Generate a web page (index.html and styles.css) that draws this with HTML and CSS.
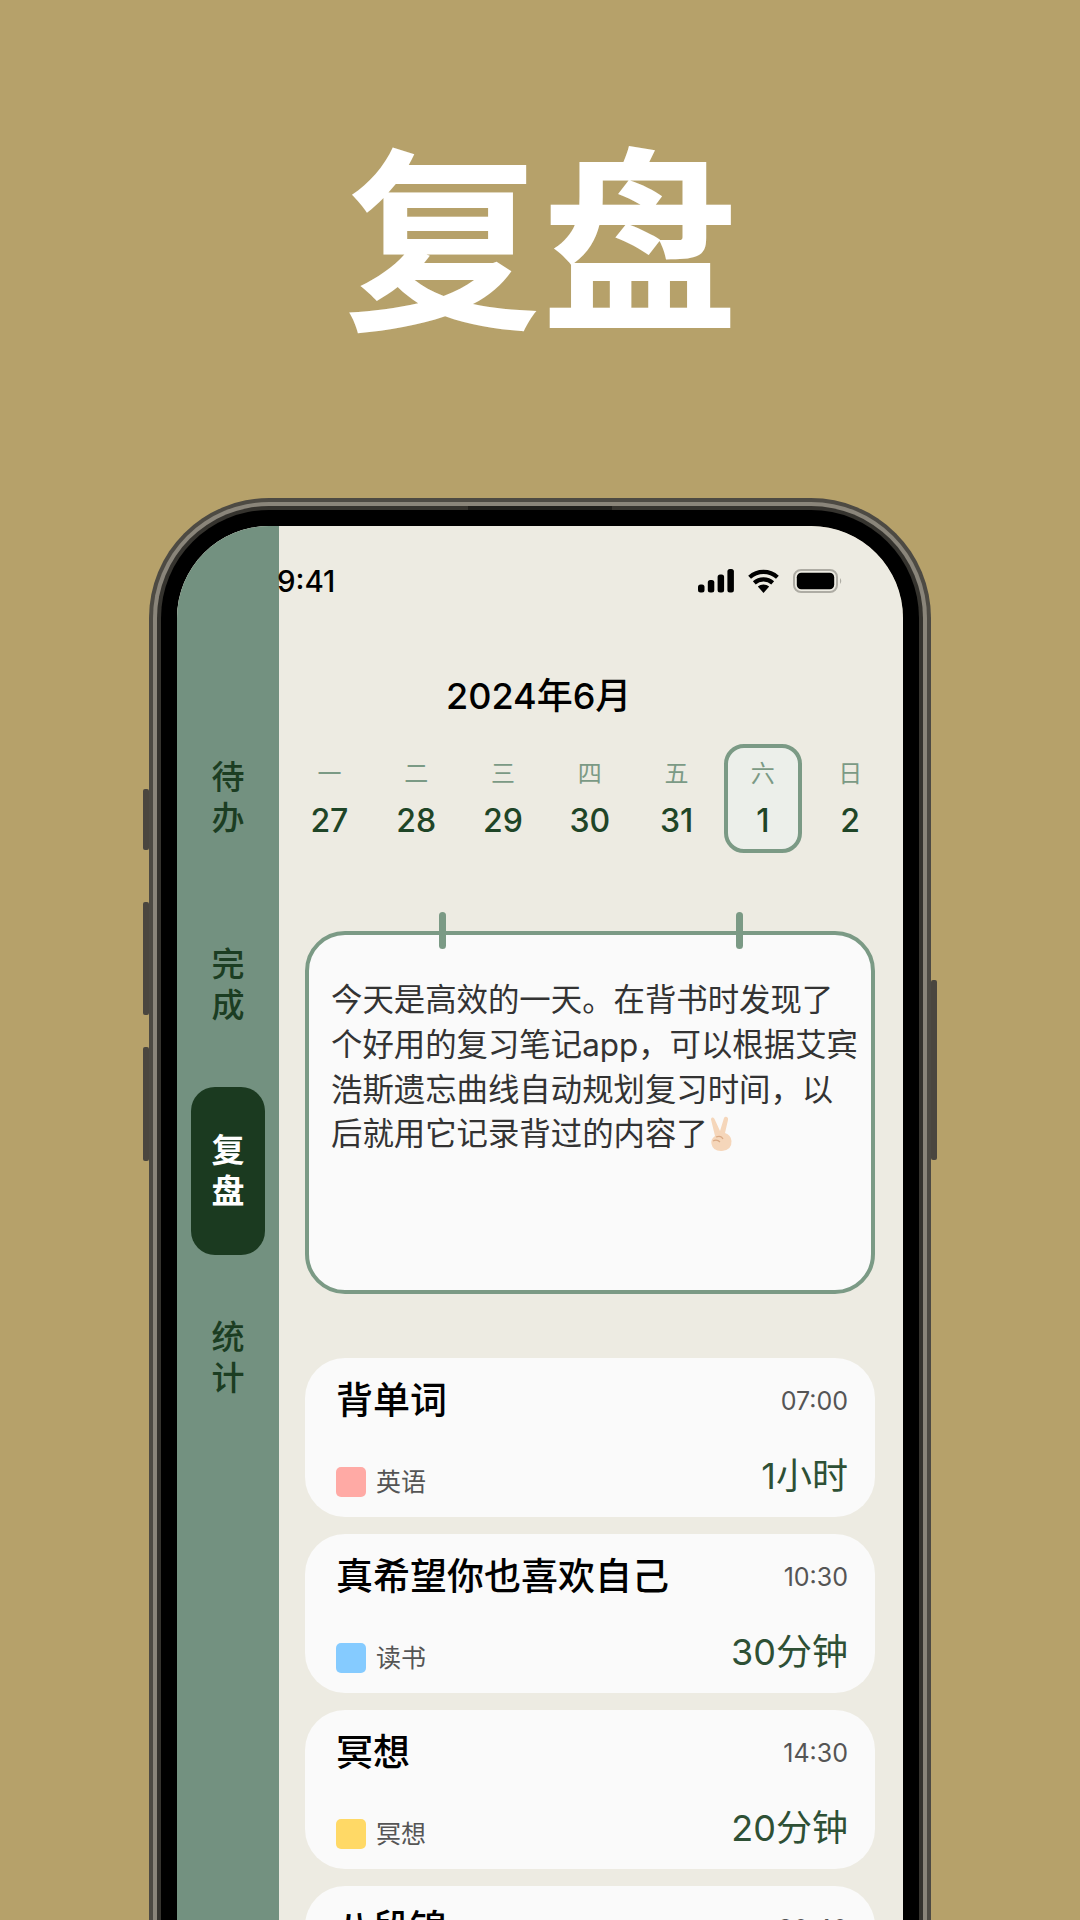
FILE: index.html
```html
<!DOCTYPE html>
<html lang="zh-CN">

<head>
    <meta charset="UTF-8">
    <meta name="viewport" content="width=device-width, initial-scale=1.0">
    <title>复盘</title>
    <link rel="stylesheet" href="styles.css">
</head>

<body>
    <h1 class="headline">复盘</h1>

    <div class="phone">
        <span class="side-btn mute"></span>
        <span class="side-btn vol-up"></span>
        <span class="side-btn vol-down"></span>
        <span class="side-btn power"></span>
        <span class="speaker"></span>

        <div class="screen">
            <nav class="rail">
                <div class="rail-item">待<br>办</div>
                <div class="rail-item">完<br>成</div>
                <div class="rail-item active">复<br>盘</div>
                <div class="rail-item">统<br>计</div>
            </nav>

            <main class="content">
                <div class="status-bar">
                    <span class="clock">9:41</span>
                    <div class="status-icons">
                        <!-- signal -->
                        <svg width="36" height="24" viewBox="0 0 36 24">
                            <rect x="0" y="15.5" width="6.5" height="8" rx="2.5" />
                            <rect x="9.8" y="11" width="6.5" height="12.5" rx="2.5" />
                            <rect x="19.6" y="5.5" width="6.5" height="18" rx="2.5" />
                            <rect x="29.4" y="0" width="6.5" height="23.5" rx="2.5" />
                        </svg>
                        <!-- wifi -->
                        <svg width="31" height="24" viewBox="0 0 31 24">
                            <path d="M15.5 24 L9.8 17.6 A8.6 8.6 0 0 1 21.2 17.6 Z" />
                            <path d="M6.3 13.9 A13.6 13.6 0 0 1 24.7 13.9" fill="none" stroke="#000" stroke-width="4.2" />
                            <path d="M1.6 8.2 A20.8 20.8 0 0 1 29.4 8.2" fill="none" stroke="#000" stroke-width="4.2" />
                        </svg>
                        <!-- battery -->
                        <svg width="50" height="24" viewBox="0 0 50 24">
                            <rect x="1" y="1" width="43" height="22" rx="7" fill="none" stroke="#aeaca4" stroke-width="2" />
                            <rect x="3.8" y="3.8" width="37.4" height="16.4" rx="4.5" />
                            <path d="M47 9 Q49.5 12 47 15 Z" fill="#aeaca4" />
                        </svg>
                    </div>
                </div>

                <div class="month">2024年6月</div>

                <div class="week">
                    <div class="day"><span class="dow">一</span><span class="num">27</span></div>
                    <div class="day"><span class="dow">二</span><span class="num">28</span></div>
                    <div class="day"><span class="dow">三</span><span class="num">29</span></div>
                    <div class="day"><span class="dow">四</span><span class="num">30</span></div>
                    <div class="day"><span class="dow">五</span><span class="num">31</span></div>
                    <div class="day selected"><span class="dow">六</span><span class="num">1</span></div>
                    <div class="day"><span class="dow">日</span><span class="num">2</span></div>
                </div>

                <div class="note">
                    <span class="ring ring-left"></span>
                    <span class="ring ring-right"></span>
                    <p>今天是高效的一天。在背书时发现了个好用的复习笔记app，可以根据艾宾浩斯遗忘曲线自动规划复习时间，以后就用它记录背过的内容了<svg class="victory" viewBox="0 0 26 36">
                            <path d="M7 20 L3 3.5 Q3 1 5 1.5 Q6.5 2 7 4 L12 15 L16 2 Q17 0 19 1 Q20.5 2 20 4 L17 17 Q23 19 23.5 25 Q24 34 14 35 Q5 35.5 3.5 28 Q2.5 23 7 20 Z" fill="#f5d6ba" />
                            <path d="M8 21 Q13 19 15 23 M5 25 Q9 23 12 26" fill="none" stroke="#d9a984" stroke-width="1.2" />
                        </svg></p>
                </div>

                <div class="tasks">
                    <div class="task">
                        <div class="task-row">
                            <span class="task-title">背单词</span>
                            <span class="task-time">07:00</span>
                        </div>
                        <div class="task-row bottom">
                            <span class="task-tag"><i class="swatch pink"></i>英语</span>
                            <span class="task-dur">1小时</span>
                        </div>
                    </div>
                    <div class="task">
                        <div class="task-row">
                            <span class="task-title">真希望你也喜欢自己</span>
                            <span class="task-time">10:30</span>
                        </div>
                        <div class="task-row bottom">
                            <span class="task-tag"><i class="swatch blue"></i>读书</span>
                            <span class="task-dur">30分钟</span>
                        </div>
                    </div>
                    <div class="task">
                        <div class="task-row">
                            <span class="task-title">冥想</span>
                            <span class="task-time">14:30</span>
                        </div>
                        <div class="task-row bottom">
                            <span class="task-tag"><i class="swatch yellow"></i>冥想</span>
                            <span class="task-dur">20分钟</span>
                        </div>
                    </div>
                    <div class="task">
                        <div class="task-row">
                            <span class="task-title">八段锦</span>
                            <span class="task-time">20:40</span>
                        </div>
                    </div>
                </div>
            </main>
        </div>
    </div>
</body>

</html>
```

FILE: styles.css
```css
* {
    box-sizing: border-box;
}

html,
body {
    margin: 0;
    height: 1920px;
    overflow: hidden;
}

body {
    background-color: #b6a16a;
    font-family: Inter, "Noto Sans CJK SC", sans-serif;
}

.headline {
    margin: 0;
    padding-top: 113px;
    padding-left: 3px;
    height: 526px;
    text-align: center;
    color: #fff;
    font-family: "Noto Sans CJK SC", sans-serif;
    font-size: 197px;
    line-height: 232px;
    font-weight: 700;
}

/* device frame */
.phone {
    position: relative;
    width: 726px;
    margin-left: 177px;
    height: 1394px;
    border-radius: 92px 92px 0 0;
    box-shadow: 0 0 0 16px #000, 0 0 0 20px #35332e, 0 0 0 24px #8a857a, 0 0 0 28px #4d4a43;
}

.side-btn {
    position: absolute;
    width: 6px;
    background-color: #4a463f;
    border-radius: 2px;
}

.mute {
    left: -34px;
    top: 263px;
    height: 61px;
}

.vol-up {
    left: -34px;
    top: 376px;
    height: 113px;
}

.vol-down {
    left: -34px;
    top: 521px;
    height: 114px;
}

.power {
    right: -34px;
    top: 454px;
    height: 180px;
}

.speaker {
    position: absolute;
    left: 291px;
    top: -20px;
    width: 144px;
    height: 4px;
    background-color: #1f1e1b;
}

.screen {
    display: flex;
    height: 100%;
    border-radius: 92px 92px 0 0;
    overflow: hidden;
    background-color: #edebe2;
}

/* left rail */
.rail {
    flex: 0 0 102px;
    background-color: #739180;
    padding: 188px 14px 0;
    display: flex;
    flex-direction: column;
    gap: 18.5px;
}

.rail-item {
    height: 168px;
    display: flex;
    align-items: center;
    justify-content: center;
    text-align: center;
    font-size: 33px;
    line-height: 41px;
    font-weight: 500;
    color: #1b3d22;
    border-radius: 24px;
}

.rail-item.active {
    background-color: #1b3a20;
    color: #fff;
    font-weight: 700;
}

.content {
    flex: 1;
    min-width: 0;
}

/* status bar */
.status-bar {
    display: flex;
    justify-content: space-between;
    align-items: center;
    height: 30px;
    margin-top: 40px;
    padding-right: 60px;
}

.clock {
    font-size: 29.5px;
    font-weight: 500;
    color: #000;
    margin-left: -2px;
}

.status-icons {
    display: flex;
    align-items: center;
    gap: 14px;
}

.month {
    margin-top: 75px;
    padding-left: 167px;
    font-size: 36px;
    line-height: 50px;
    font-weight: 500;
    color: #000;
}

/* week strip */
.week {
    display: flex;
    margin: 23px 0 0 7px;
}

.day {
    width: 86.8px;
    height: 109px;
    display: flex;
    flex-direction: column;
    align-items: center;
    padding-top: 13px;
    color: #1f4527;
}

.dow {
    font-size: 24px;
    line-height: 34px;
    color: #7b9a85;
}

.num {
    font-size: 32px;
    line-height: 42px;
    margin-top: 9px;
    font-weight: 500;
}

.selected {
    width: 78px;
    margin: 0 5px 0 3.8px;
    border: 4px solid #7b9a85;
    border-radius: 20px;
    background-color: #ecefea;
    padding-top: 9px;
}

/* note card */
.note {
    position: relative;
    width: 570px;
    height: 363px;
    margin: 78px 0 0 26px;
    padding: 43px 10px 0 22px;
    border: 4px solid #7b9a85;
    border-radius: 40px;
    background-color: #fafafa;
}

.note p {
    margin: 0;
    font-size: 31.4px;
    line-height: 44.8px;
    color: #333;
}

.ring {
    position: absolute;
    top: -23px;
    width: 7px;
    height: 37px;
    border-radius: 4px;
    background-color: #7b9a85;
}

.ring-left {
    left: 130px;
}

.ring-right {
    left: 427px;
}

.victory {
    width: 26px;
    height: 36px;
    vertical-align: -7px;
}

/* task cards */
.tasks {
    margin: 64px 0 0 26px;
    width: 570px;
    display: flex;
    flex-direction: column;
    gap: 17px;
}

.task {
    height: 159px;
    padding: 20px 27px 0 31px;
    border-radius: 40px;
    background-color: #fafafa;
}

.task-row {
    display: flex;
    justify-content: space-between;
    align-items: center;
}

.task-row.bottom {
    margin-top: 29px;
}

.task-title {
    font-size: 37px;
    line-height: 46px;
    font-weight: 500;
    color: #000;
}

.task-time {
    font-size: 25px;
    color: #555;
}

.task-tag {
    display: flex;
    align-items: center;
    gap: 10px;
    font-size: 25px;
    line-height: 30px;
    color: #555;
    margin-top: 11px;
}

.swatch {
    width: 30px;
    height: 30px;
    border-radius: 5px;
}

.pink {
    background-color: #ffaaa5;
}

.blue {
    background-color: #85cbff;
}

.yellow {
    background-color: #ffd966;
}

.task-dur {
    font-size: 36px;
    line-height: 46px;
    color: #2e5035;
}
```
